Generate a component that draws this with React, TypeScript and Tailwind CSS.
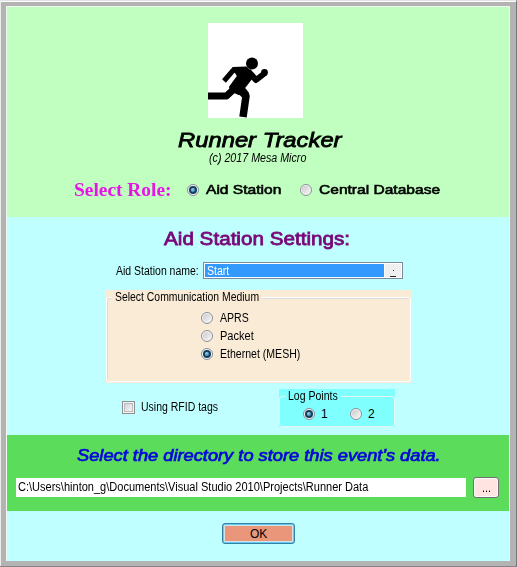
import { useLayoutEffect, useRef, type ReactNode } from "react";

// One line of text stretched or condensed to the width of its box.
function Fit({ children, className = "" }: { children: ReactNode; className?: string }) {
  const outer = useRef<HTMLSpanElement>(null);
  const inner = useRef<HTMLSpanElement>(null);
  useLayoutEffect(() => {
    const o = outer.current;
    const i = inner.current;
    if (o && i) i.style.transform = `scaleX(${o.clientWidth / i.offsetWidth})`;
  }, []);
  return (
    <span ref={outer} className={`block shrink-0 whitespace-nowrap ${className}`}>
      <span ref={inner} className="inline-block origin-left align-top">
        {children}
      </span>
    </span>
  );
}

function Radio({ checked = false }: { checked?: boolean }) {
  return (
    <span className="flex size-[12px] shrink-0 items-center justify-center rounded-full border border-[#8a9096] bg-[#f4f4f4]">
      {checked ? (
        <span className="flex size-[8px] items-center justify-center rounded-full bg-[#143f60]">
          <span className="size-[4px] rounded-full bg-gradient-to-br from-[#c4ecfa] to-[#1b78a8]" />
        </span>
      ) : (
        <span className="size-[8px] rounded-full bg-gradient-to-br from-[#cbcbce] to-[#f6f6f6]" />
      )}
    </span>
  );
}

function Runner() {
  return (
    <svg viewBox="0 0 95 95" className="block size-[95px] bg-white" fill="none" stroke="#000" strokeLinejoin="round">
      <defs>
        <filter id="soft-edge">
          <feGaussianBlur stdDeviation="0.7" />
        </filter>
      </defs>
      <g filter="url(#soft-edge)">
        <circle cx="44" cy="40.5" r="6" fill="#000" stroke="none" />
        <path d="M25 45 L38 44.5 L46 52 L36 65 L40 70 L31 71 L24 68 L22 64 L30 53 Z" fill="#000" strokeWidth="2" />
        <path d="M33 47 L25 47.5 L16 58" strokeWidth="5" />
        <path d="M40 48 L48 57 L57 50" strokeWidth="6" />
        <circle cx="56.5" cy="49.5" r="3.4" fill="#000" stroke="none" />
        <path d="M28 64 L18.5 73 L-2 73" strokeWidth="7" />
        <path d="M30 65 L38 73 L35 94" strokeWidth="7.5" />
      </g>
    </svg>
  );
}

export default function App() {
  return (
    <main className="h-[567px] w-[517px] border-t border-r border-b border-t-[#e2e2e2] border-r-[#777] border-b-[#858585] bg-[#b3b3b3] font-['Liberation_Sans',Arial,sans-serif] text-[12px] leading-[14px] text-black">
      <div className="h-full border-t border-l border-t-white border-l-[#ececec] pt-[4px] pr-[6px] pb-[5px] pl-[5px]">
        <div className="h-full border-t border-r border-l border-[#eef8ee] bg-[#c0ffff]">
          <header className="flex h-[210px] flex-col bg-[#c0ffc0] pt-4 pl-[67px]">
            <div className="pl-[134px]">
              <Runner />
            </div>
            <h1 className="mt-[12px] ml-[104px] h-[20px] text-[20px] leading-[20px] font-normal italic [-webkit-text-stroke:0.8px]">
              <Fit className="w-[163px]">Runner Tracker</Fit>
            </h1>
            <p className="mt-px ml-[135px] italic">
              <Fit className="w-[97px]">(c) 2017 Mesa Micro</Fit>
            </p>
            <div className="mt-[13px] flex h-6 items-center">
              <h2 className="font-['Liberation_Serif','Times_New_Roman',serif] text-[18px] leading-5 font-bold text-[#e714e7]">
                <Fit className="w-[97px]">Select Role:</Fit>
              </h2>
              <label className="ml-[16px] flex items-center gap-[7px] text-[13.5px] leading-4 [-webkit-text-stroke:0.6px]">
                <Radio checked />
                <Fit className="w-[75px]">Aid Station</Fit>
              </label>
              <label className="ml-[19px] flex items-center gap-[7px] text-[13.5px] leading-4 [-webkit-text-stroke:0.6px]">
                <Radio />
                <Fit className="w-[121px]">Central Database</Fit>
              </label>
            </div>
          </header>

          <section className="h-[218px] pt-[10px]">
            <h2 className="ml-[157px] h-[24px] text-[19px] leading-[23px] text-[#780878] [-webkit-text-stroke:0.8px]">
              <Fit className="w-[186px]">Aid Station Settings:</Fit>
            </h2>
            <div className="mt-[11px] ml-[109px] flex items-center gap-[4px]">
              <Fit className="w-[83px]">Aid Station name:</Fit>
              <div className="flex h-[17px] w-[200px] border border-[#7a8a99] bg-white p-px">
                <div className="flex-1 bg-[#3399ff] pl-[2px] leading-[14px] text-white">
                  <Fit className="w-[22px]">Start</Fit>
                </div>
                <div className="ml-px flex w-[16px] flex-col items-center justify-end bg-[#efefef]">
                  <span className="mb-[5px] h-px w-px bg-[#333]" />
                  <span className="h-px w-[6px] bg-[#222]" />
                </div>
              </div>
            </div>

            <div className="mt-[11px] ml-[99px] h-[93px] w-[305px] bg-[#faebd7]">
              <fieldset className="h-[92px] rounded-[3px] border border-white px-0 shadow-[inset_1px_1px_0_#dcdcdc]">
                <legend className="ml-[5px] bg-[#faebd7] px-[3px]">
                  <Fit className="w-[144px]">Select Communication Medium</Fit>
                </legend>
                <div className="mt-[7px] flex flex-col gap-[4px] pl-[94px]">
                  <label className="flex items-center gap-[7px]">
                    <Radio />
                    <Fit className="w-[29px]">APRS</Fit>
                  </label>
                  <label className="flex items-center gap-[7px]">
                    <Radio />
                    <Fit className="w-[34px]">Packet</Fit>
                  </label>
                  <label className="flex items-center gap-[7px]">
                    <Radio checked />
                    <Fit className="w-[80px]">Ethernet (MESH)</Fit>
                  </label>
                </div>
              </fieldset>
            </div>

            <div className="mt-[6px] flex pl-[115px]">
              <label className="mt-[11px] flex h-[14px] w-[157px] items-center gap-[6px]">
                <span className="flex size-[13px] shrink-0 items-center justify-center border border-[#8e8f8f] bg-[#f4f4f4]">
                  <span className="size-[9px] border border-[#b8bcc0] bg-gradient-to-br from-[#d2d4d8] to-[#f4f4f4]" />
                </span>
                <Fit className="w-[77px]">Using RFID tags</Fit>
              </label>
              <div className="h-[38px] w-[116px] bg-[#80ffff]">
                <fieldset className="h-[38px] rounded-[3px] border border-[#e6f4f4]">
                  <legend className="ml-[5px] bg-[#80ffff] px-[3px]">
                    <Fit className="w-[50px]">Log Points</Fit>
                  </legend>
                  <div className="mt-[4px] flex gap-[22px] pl-[23px]">
                    <label className="flex items-center gap-[6px]">
                      <Radio checked />
                      <Fit className="w-[7px]">1</Fit>
                    </label>
                    <label className="flex items-center gap-[6px]">
                      <Radio />
                      <Fit className="w-[7px]">2</Fit>
                    </label>
                  </div>
                </fieldset>
              </div>
            </div>
          </section>

          <section className="h-[76px] bg-[#5bdc5b] pt-[10px]">
            <h2 className="ml-[70px] h-[22px] text-[17px] leading-[22px] text-[#0505dc] italic [-webkit-text-stroke:0.7px]">
              <Fit className="w-[364px]">Select the directory to store this event's data.</Fit>
            </h2>
            <div className="mt-[10px] ml-[9px] flex items-center gap-[7px]">
              <div className="h-[19px] w-[450px] bg-white pt-[2px] pl-[2px]">
                <Fit className="w-[350px]">C:\Users\hinton_g\Documents\Visual Studio 2010\Projects\Runner Data</Fit>
              </div>
              <button className="flex h-[21px] w-[26px] items-center justify-center rounded-[3px] border border-[#707070] bg-[#ffe4e1] shadow-[inset_0_0_0_1px_#fafafa]">
                <Fit className="w-[9px]">...</Fit>
              </button>
            </div>
          </section>

          <footer className="flex pt-3 pl-[215px]">
            <button className="flex h-[21px] w-[73px] items-center justify-center rounded-[3px] border border-[#3480a8] bg-[#e9967a] shadow-[inset_0_0_0_1px_#62cdf0,inset_0_0_0_2px_#d4e4e6]">
              <Fit className="w-[17px]">OK</Fit>
            </button>
          </footer>
        </div>
      </div>
    </main>
  );
}
